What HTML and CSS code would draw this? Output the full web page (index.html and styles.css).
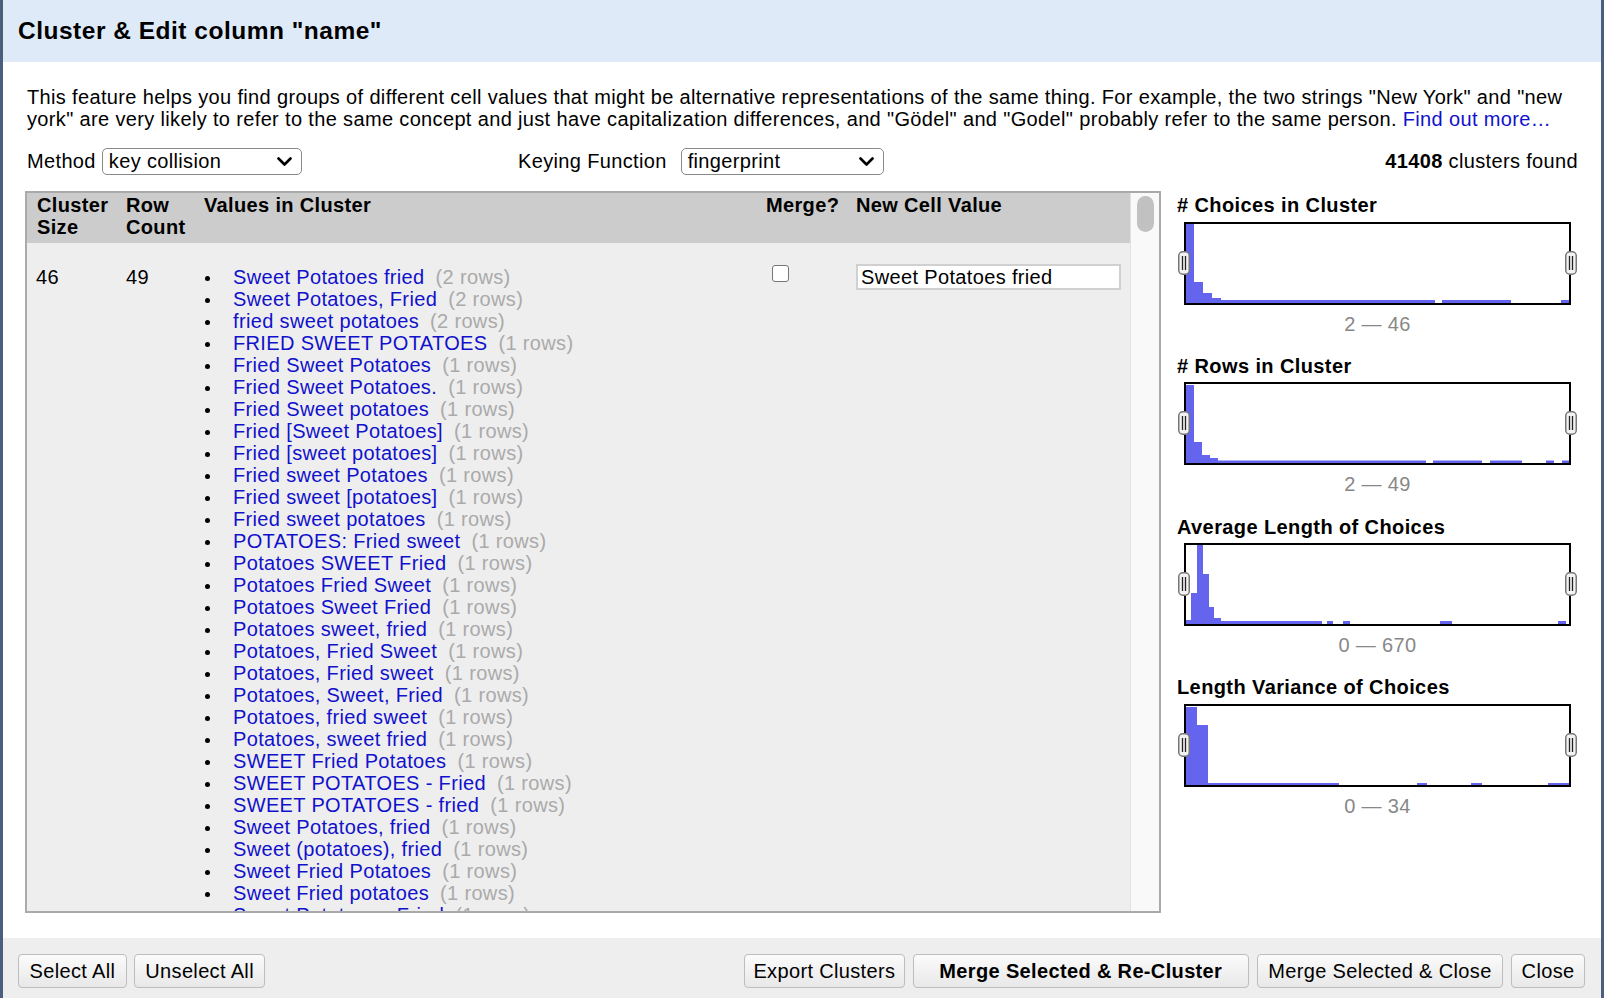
FILE: index.html
```html
<!DOCTYPE html>
<html lang="en">
<head>
<meta charset="utf-8">
<title>Cluster &amp; Edit column "name"</title>
<link rel="stylesheet" href="styles.css">
</head>
<body>
<div class="dialog">
  <div class="dialog-header">
    <h1 class="dialog-title">Cluster &amp; Edit column "name"</h1>
  </div>
  <div class="dialog-body">
    <p class="description">This feature helps you find groups of different cell values that might be alternative representations of the same thing. For example, the two strings "New York" and "new york" are very likely to refer to the same concept and just have capitalization differences, and "Gödel" and "Godel" probably refer to the same person. <a class="link" href="#">Find out more…</a></p>
    <div class="controls">
      <div class="control control-method">
        <span class="control-label">Method</span>
        <div class="select select-method"><span>key collision</span><svg class="chevron" width="15" height="9" viewBox="0 0 15 9"><path d="M1.5 1.5l6 6 6-6" fill="none" stroke="#000" stroke-width="2.6" stroke-linecap="round" stroke-linejoin="round"/></svg></div>
      </div>
      <div class="control control-keying">
        <span class="control-label">Keying Function</span>
        <div class="select select-keying"><span>fingerprint</span><svg class="chevron" width="15" height="9" viewBox="0 0 15 9"><path d="M1.5 1.5l6 6 6-6" fill="none" stroke="#000" stroke-width="2.6" stroke-linecap="round" stroke-linejoin="round"/></svg></div>
      </div>
      <div class="cluster-count"><b>41408</b> clusters found</div>
    </div>
    <div class="content">
      <div class="frame">
        <div class="table-scroll">
          <table class="cluster-table">
            <colgroup>
              <col class="col-size"><col class="col-rows"><col class="col-values"><col class="col-merge"><col class="col-new">
            </colgroup>
            <thead>
              <tr>
                <th>Cluster<br>Size</th>
                <th>Row<br>Count</th>
                <th>Values in Cluster</th>
                <th>Merge?</th>
                <th>New Cell Value</th>
              </tr>
            </thead>
            <tbody>
              <tr>
                <td class="cell-size">46</td>
                <td>49</td>
                <td>
                  <ul class="values">
                    <li><a class="link" href="#">Sweet Potatoes fried</a><span class="count">(2 rows)</span></li>
                    <li><a class="link" href="#">Sweet Potatoes, Fried</a><span class="count">(2 rows)</span></li>
                    <li><a class="link" href="#">fried sweet potatoes</a><span class="count">(2 rows)</span></li>
                    <li><a class="link" href="#">FRIED SWEET POTATOES</a><span class="count">(1 rows)</span></li>
                    <li><a class="link" href="#">Fried Sweet Potatoes</a><span class="count">(1 rows)</span></li>
                    <li><a class="link" href="#">Fried Sweet Potatoes.</a><span class="count">(1 rows)</span></li>
                    <li><a class="link" href="#">Fried Sweet potatoes</a><span class="count">(1 rows)</span></li>
                    <li><a class="link" href="#">Fried [Sweet Potatoes]</a><span class="count">(1 rows)</span></li>
                    <li><a class="link" href="#">Fried [sweet potatoes]</a><span class="count">(1 rows)</span></li>
                    <li><a class="link" href="#">Fried sweet Potatoes</a><span class="count">(1 rows)</span></li>
                    <li><a class="link" href="#">Fried sweet [potatoes]</a><span class="count">(1 rows)</span></li>
                    <li><a class="link" href="#">Fried sweet potatoes</a><span class="count">(1 rows)</span></li>
                    <li><a class="link" href="#">POTATOES: Fried sweet</a><span class="count">(1 rows)</span></li>
                    <li><a class="link" href="#">Potatoes SWEET Fried</a><span class="count">(1 rows)</span></li>
                    <li><a class="link" href="#">Potatoes Fried Sweet</a><span class="count">(1 rows)</span></li>
                    <li><a class="link" href="#">Potatoes Sweet Fried</a><span class="count">(1 rows)</span></li>
                    <li><a class="link" href="#">Potatoes sweet, fried</a><span class="count">(1 rows)</span></li>
                    <li><a class="link" href="#">Potatoes, Fried Sweet</a><span class="count">(1 rows)</span></li>
                    <li><a class="link" href="#">Potatoes, Fried sweet</a><span class="count">(1 rows)</span></li>
                    <li><a class="link" href="#">Potatoes, Sweet, Fried</a><span class="count">(1 rows)</span></li>
                    <li><a class="link" href="#">Potatoes, fried sweet</a><span class="count">(1 rows)</span></li>
                    <li><a class="link" href="#">Potatoes, sweet fried</a><span class="count">(1 rows)</span></li>
                    <li><a class="link" href="#">SWEET Fried Potatoes</a><span class="count">(1 rows)</span></li>
                    <li><a class="link" href="#">SWEET POTATOES - Fried</a><span class="count">(1 rows)</span></li>
                    <li><a class="link" href="#">SWEET POTATOES - fried</a><span class="count">(1 rows)</span></li>
                    <li><a class="link" href="#">Sweet Potatoes, fried</a><span class="count">(1 rows)</span></li>
                    <li><a class="link" href="#">Sweet (potatoes), fried</a><span class="count">(1 rows)</span></li>
                    <li><a class="link" href="#">Sweet Fried Potatoes</a><span class="count">(1 rows)</span></li>
                    <li><a class="link" href="#">Sweet Fried potatoes</a><span class="count">(1 rows)</span></li>
                    <li><a class="link" href="#">Sweet Potatoes - Fried</a><span class="count">(1 rows)</span></li>
                    <li><a class="link" href="#">Sweet Potatoes FRIED</a><span class="count">(1 rows)</span></li>
                    <li><a class="link" href="#">Sweet potatoes fried</a><span class="count">(1 rows)</span></li>
                  </ul>
                </td>
                <td><span class="checkbox"></span></td>
                <td><div class="text-input">Sweet Potatoes fried</div></td>
              </tr>
            </tbody>
          </table>
        </div>
        <div class="scrollbar"><div class="thumb"></div></div>
      </div>
      <div class="facets">
        <div class="facet">
          <div class="facet-title"># Choices in Cluster</div>
          <div class="hist">
            <svg class="hist-svg" width="383" height="79" viewBox="0 0 383 79">
              <g fill="#6464ee">
                <rect x="0" y="0" width="8" height="79"/>
                <rect x="8" y="58" width="9" height="21"/>
                <rect x="17" y="69" width="9" height="10"/>
                <rect x="26" y="74" width="9" height="5"/>
                <rect x="35" y="76" width="214" height="3"/>
                <rect x="256" y="76" width="69" height="3"/>
                <rect x="375" y="76" width="8" height="3"/>
              </g>
            </svg>
            <span class="handle handle-left"><svg width="12" height="24" viewBox="0 0 12 24"><rect x="0.75" y="0.75" width="10.5" height="22.5" rx="4" fill="#f2f2f2" stroke="#777" stroke-width="1.5"/><path d="M4.5 5v14M7.5 5v14" stroke="#222" stroke-width="1.3"/></svg></span>
            <span class="handle handle-right"><svg width="12" height="24" viewBox="0 0 12 24"><rect x="0.75" y="0.75" width="10.5" height="22.5" rx="4" fill="#f2f2f2" stroke="#777" stroke-width="1.5"/><path d="M4.5 5v14M7.5 5v14" stroke="#222" stroke-width="1.3"/></svg></span>
          </div>
          <div class="facet-range">2 — 46</div>
        </div>
        <div class="facet">
          <div class="facet-title"># Rows in Cluster</div>
          <div class="hist">
            <svg class="hist-svg" width="383" height="79" viewBox="0 0 383 79">
              <g fill="#6464ee">
                <rect x="0" y="1" width="8" height="78"/>
                <rect x="8" y="58" width="8" height="21"/>
                <rect x="16" y="71" width="8" height="8"/>
                <rect x="24" y="74" width="8" height="5"/>
                <rect x="32" y="76.5" width="208" height="2.5"/>
                <rect x="247" y="76.5" width="49" height="2.5"/>
                <rect x="304" y="76.5" width="32" height="2.5"/>
                <rect x="360" y="76.5" width="8" height="2.5"/>
                <rect x="376" y="76.5" width="7" height="2.5"/>
              </g>
            </svg>
            <span class="handle handle-left"><svg width="12" height="24" viewBox="0 0 12 24"><rect x="0.75" y="0.75" width="10.5" height="22.5" rx="4" fill="#f2f2f2" stroke="#777" stroke-width="1.5"/><path d="M4.5 5v14M7.5 5v14" stroke="#222" stroke-width="1.3"/></svg></span>
            <span class="handle handle-right"><svg width="12" height="24" viewBox="0 0 12 24"><rect x="0.75" y="0.75" width="10.5" height="22.5" rx="4" fill="#f2f2f2" stroke="#777" stroke-width="1.5"/><path d="M4.5 5v14M7.5 5v14" stroke="#222" stroke-width="1.3"/></svg></span>
          </div>
          <div class="facet-range">2 — 49</div>
        </div>
        <div class="facet">
          <div class="facet-title">Average Length of Choices</div>
          <div class="hist">
            <svg class="hist-svg" width="383" height="79" viewBox="0 0 383 79">
              <g fill="#6464ee">
                <rect x="0" y="75" width="5" height="4"/>
                <rect x="5" y="48" width="6" height="31"/>
                <rect x="11" y="0" width="6" height="79"/>
                <rect x="17" y="29" width="6" height="50"/>
                <rect x="23" y="62" width="5" height="17"/>
                <rect x="28" y="73" width="7" height="6"/>
                <rect x="35" y="76" width="101" height="3"/>
                <rect x="141" y="76" width="6" height="3"/>
                <rect x="157" y="76" width="7" height="3"/>
                <rect x="254" y="76" width="12" height="3"/>
                <rect x="372" y="76" width="8" height="3"/>
              </g>
            </svg>
            <span class="handle handle-left"><svg width="12" height="24" viewBox="0 0 12 24"><rect x="0.75" y="0.75" width="10.5" height="22.5" rx="4" fill="#f2f2f2" stroke="#777" stroke-width="1.5"/><path d="M4.5 5v14M7.5 5v14" stroke="#222" stroke-width="1.3"/></svg></span>
            <span class="handle handle-right"><svg width="12" height="24" viewBox="0 0 12 24"><rect x="0.75" y="0.75" width="10.5" height="22.5" rx="4" fill="#f2f2f2" stroke="#777" stroke-width="1.5"/><path d="M4.5 5v14M7.5 5v14" stroke="#222" stroke-width="1.3"/></svg></span>
          </div>
          <div class="facet-range">0 — 670</div>
        </div>
        <div class="facet">
          <div class="facet-title">Length Variance of Choices</div>
          <div class="hist">
            <svg class="hist-svg" width="383" height="79" viewBox="0 0 383 79">
              <g fill="#6464ee">
                <rect x="0" y="1" width="11" height="78"/>
                <rect x="11" y="19" width="11" height="60"/>
                <rect x="22" y="77" width="131" height="2"/>
                <rect x="231" y="77" width="10" height="2"/>
                <rect x="285" y="77" width="11" height="2"/>
                <rect x="362" y="77" width="21" height="2"/>
              </g>
            </svg>
            <span class="handle handle-left"><svg width="12" height="24" viewBox="0 0 12 24"><rect x="0.75" y="0.75" width="10.5" height="22.5" rx="4" fill="#f2f2f2" stroke="#777" stroke-width="1.5"/><path d="M4.5 5v14M7.5 5v14" stroke="#222" stroke-width="1.3"/></svg></span>
            <span class="handle handle-right"><svg width="12" height="24" viewBox="0 0 12 24"><rect x="0.75" y="0.75" width="10.5" height="22.5" rx="4" fill="#f2f2f2" stroke="#777" stroke-width="1.5"/><path d="M4.5 5v14M7.5 5v14" stroke="#222" stroke-width="1.3"/></svg></span>
          </div>
          <div class="facet-range">0 — 34</div>
        </div>
      </div>
    </div>
  </div>
  <div class="dialog-footer">
    <div class="btn-group btn-group-left">
      <button class="btn">Select All</button>
      <button class="btn">Unselect All</button>
    </div>
    <div class="btn-group btn-group-right">
      <button class="btn btn-export">Export Clusters</button>
      <button class="btn btn-primary">Merge Selected &amp; Re-Cluster</button>
      <button class="btn">Merge Selected &amp; Close</button>
      <button class="btn btn-close">Close</button>
    </div>
  </div>
</div>
</body>
</html>
```

FILE: styles.css
```css
* { box-sizing: border-box; }
html, body { margin: 0; padding: 0; }
body {
  font-family: "Liberation Sans", Arial, Helvetica, sans-serif;
  font-size: 20px;
  letter-spacing: 0.35px;
  color: #000;
  background: #fff;
}

.dialog {
  width: 1604px;
  height: 998px;
  border-left: 3px solid #4b5e7e;
  border-right: 3px solid #4b5e7e;
  display: flex;
  flex-direction: column;
  overflow: hidden;
}

.dialog-header {
  height: 62px;
  flex: none;
  background: #dfeaf8;
  display: flex;
  align-items: center;
  padding-left: 15px;
}
.dialog-title {
  margin: 0;
  font-size: 24.5px;
  font-weight: bold;
  letter-spacing: 0.5px;
}

.dialog-body {
  flex: 1;
  padding: 0 23px 0 22px;
  display: flex;
  flex-direction: column;
}

.description {
  margin: 24px 0 0;
  padding-left: 2px;
  line-height: 22px;
}
.link { color: #1111cc; text-decoration: none; }

.controls {
  margin-top: 18px;
  height: 27px;
  display: flex;
  align-items: center;
  padding-left: 2px;
}
.control { display: flex; align-items: center; }
.control-method { width: 491px; }
.select {
  height: 27px;
  display: flex;
  align-items: center;
  justify-content: space-between;
  border: 1.5px solid #8a8a8a;
  border-radius: 5px;
  background: #fff;
  padding: 0 9px 0 6px;
}
.select-method { width: 200px; margin-left: 6px; }
.select-keying { width: 203px; margin-left: 14px; }
.chevron { display: block; }
.cluster-count { margin-left: auto; }

.content {
  margin-top: 16px;
  height: 722px;
  flex: none;
  display: flex;
  gap: 16px;
}

.frame {
  width: 1136px;
  flex: none;
  border: 2px solid #aaa;
  background: #eee;
  display: flex;
}
.table-scroll { flex: 1; overflow: hidden; }
.scrollbar {
  width: 29px;
  flex: none;
  background: #f9f9f9;
  border-left: 1px solid #e2e2e2;
  padding: 3px 0 0 6px;
}
.thumb {
  width: 17px;
  height: 36px;
  border-radius: 9px;
  background: #c1c1c1;
}

.cluster-table {
  width: 100%;
  table-layout: fixed;
  border-collapse: collapse;
}
.col-size { width: 89px; }
.col-rows { width: 78px; }
.col-values { width: 562px; }
.col-merge { width: 90px; }
.cluster-table th {
  background: #ccc;
  text-align: left;
  vertical-align: top;
  padding: 1px 10px 5px;
  line-height: 22px;
  height: 50px;
  font-weight: bold;
}
.cluster-table td {
  vertical-align: top;
  padding: 23px 10px 0;
  line-height: 22px;
}
.cluster-table td.cell-size { padding-left: 9px; }

.values { list-style: none; margin: 0; padding: 0; }
.values li { display: flex; align-items: center; white-space: nowrap; }
.values li::before {
  content: "";
  width: 5px;
  height: 5px;
  border-radius: 50%;
  background: #000;
  margin: 3px 23px 0 1px;
  flex: none;
}
.count { color: #aaa; margin-left: 11px; }

.checkbox {
  display: block;
  width: 17px;
  height: 17px;
  margin-left: 6px;
  margin-top: -1px;
  border: 1.5px solid #767676;
  border-radius: 3px;
  background: #fff;
}
.text-input {
  width: 265px;
  height: 26px;
  margin-top: -2px;
  border: 2px solid #d0d0d0;
  background: #fff;
  padding: 0 3px;
  line-height: 22px;
  white-space: nowrap;
}

.facets { flex: 1; padding-top: 3px; }
.facet { margin-bottom: 20.3px; }
.facet-title { font-weight: bold; line-height: 22px; letter-spacing: 0.4px; }
.hist {
  position: relative;
  width: 387px;
  height: 83px;
  margin: 5.5px 0 0 7px;
  border: 2px solid #000;
  background: #fff;
}
.hist-svg { display: block; }
.handle { position: absolute; top: 27px; width: 12px; height: 24px; }
.handle svg { display: block; }
.handle-left { left: -8px; }
.handle-right { right: -8px; }
.facet-range {
  width: 387px;
  margin: 8px 0 0 7px;
  text-align: center;
  color: #888;
  line-height: 22px;
}

.dialog-footer {
  height: 60px;
  flex: none;
  background: #eee;
  display: flex;
  padding: 16px 16px 0 15px;
}
.btn-group { display: flex; gap: 8px; align-items: flex-start; }
.btn-group-left { gap: 7px; }
.btn-group-right { margin-left: auto; }
.btn {
  height: 34px;
  padding: 0 10.5px;
  border: 1.5px solid #bdbdbd;
  border-radius: 4px;
  background: linear-gradient(#fbfbfb, #e8e8e8);
  font-family: inherit;
  font-size: 20px;
  letter-spacing: 0.35px;
  color: #000;
}
.btn-export { padding: 0 8.5px; }
.btn-close { padding: 0 9.5px; }
.btn-primary { font-weight: bold; padding: 0 25.5px; }
```
